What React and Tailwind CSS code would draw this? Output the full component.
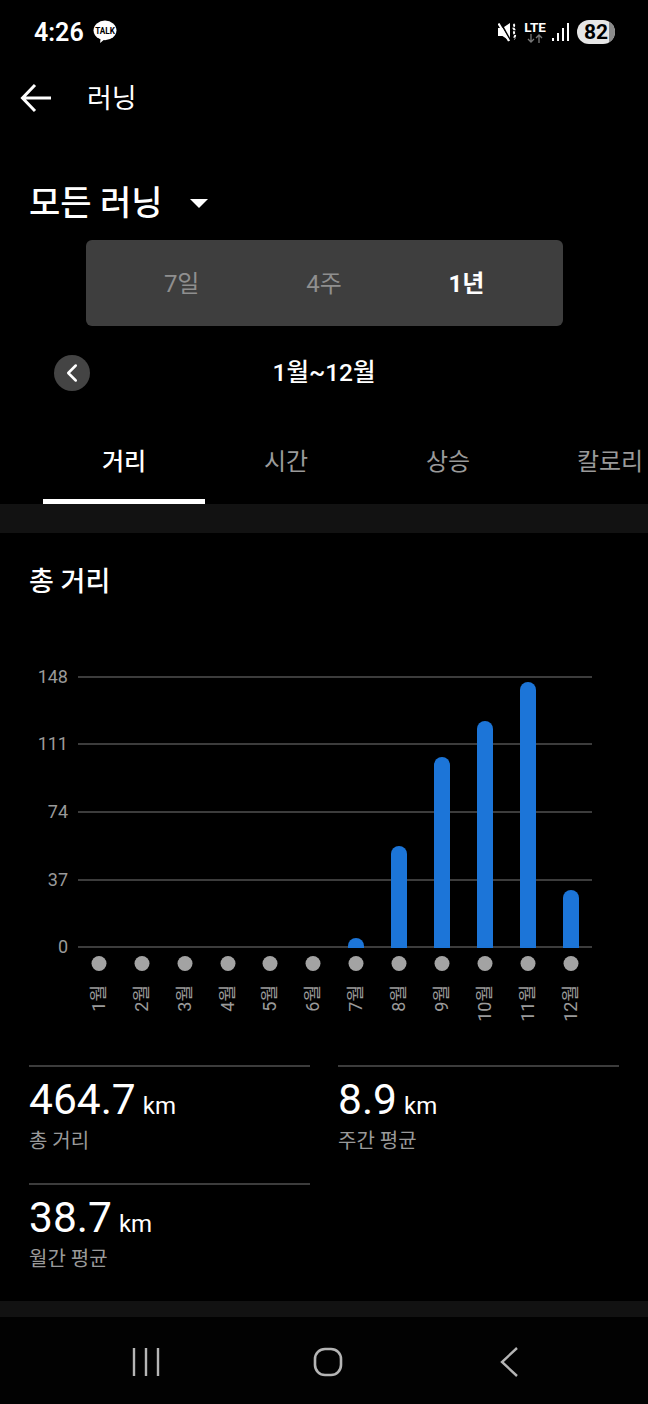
import React from 'react';
import { ChevronLeft } from 'lucide-react';

const FONT = "font-['Roboto','Noto_Sans_CJK_KR',sans-serif]";

const TICKS = [
  { label: '148', y: 677 },
  { label: '111', y: 744 },
  { label: '74', y: 812 },
  { label: '37', y: 880 },
  { label: '0', y: 947 },
];

const MONTHS = [
  { x: 99, top: null },
  { x: 142, top: null },
  { x: 185, top: null },
  { x: 228, top: null },
  { x: 270, top: null },
  { x: 313, top: null },
  { x: 356, top: 938 },
  { x: 399, top: 846 },
  { x: 442, top: 757 },
  { x: 485, top: 721 },
  { x: 528, top: 682 },
  { x: 571, top: 890 },
];

const StatusBar = () => (
  <div className="flex h-[62px] items-center justify-between pl-[34px] pr-[33px] pt-[2px]">
    <div className="flex items-center gap-[9px]">
      <span className="text-[25px] font-semibold leading-none text-white">4:26</span>
      <svg width="24" height="24" viewBox="0 0 22 22">
        <ellipse cx="11" cy="9.5" rx="10.5" ry="9" fill="#fff" />
        <path d="M7 16l-0.5 5 5-4z" fill="#fff" />
        <text x="11" y="12.5" textAnchor="middle" fontSize="7.5" fontWeight="700" fill="#000" fontFamily="Roboto">TALK</text>
      </svg>
    </div>
    <div className="flex items-center">
      {/* mute */}
      <svg width="19" height="20" viewBox="0 0 19 20" className="mr-[8px]">
        <path d="M0 6h4.500L12 1v18l-7.500-5H0z" fill="#fff" />
        <path d="M2.500 0.500l10 18" stroke="#000" strokeWidth="1.600" />
        <path d="M0.500 1.500l10.500 17.500" stroke="#fff" strokeWidth="2.200" />
        <path d="M15.500 2c2.500 2-1.500 3 .5 5s-1.500 3 .5 5-1.500 3 .5 5" stroke="#fff" strokeWidth="2" strokeDasharray="3 1" fill="none" />
      </svg>
      {/* LTE */}
      <div className="mr-[7px] flex w-[20px] flex-col items-center">
        <span className="text-[13.500px] font-bold leading-[13px] text-white">LTE</span>
        <svg width="16" height="9" viewBox="0 0 16 9">
          <path d="M4 0v8M1 5l3 3 3-3" stroke="#777" strokeWidth="1.300" fill="none" />
          <path d="M12 9V1M9 4l3-3 3 3" stroke="#777" strokeWidth="1.300" fill="none" />
        </svg>
      </div>
      {/* signal */}
      <svg width="18" height="18" viewBox="0 0 18 18" className="mr-[7px]">
        <rect x="0" y="15" width="2" height="3" fill="#fff" />
        <rect x="5" y="10" width="2" height="8" fill="#fff" />
        <rect x="10" y="5" width="2" height="13" fill="#fff" />
        <rect x="15" y="0" width="2" height="18" fill="#fff" />
      </svg>
      <div className="relative flex h-[24px] w-[38px] items-center justify-center overflow-hidden rounded-full bg-[#e6e6e6]">
        <div className="absolute inset-y-0 right-0 w-[6px] bg-[#8a8a8a]" />
        <span className="relative text-[21px] font-bold leading-none text-black">82</span>
      </div>
    </div>
  </div>
);

const Chart = () => (
  <svg width="648" height="400" viewBox="0 640 648 400" className="block">
    {TICKS.map((t) => (
      <g key={t.label}>
        <line x1="78" x2="592" y1={t.y} y2={t.y} stroke="#3c3c3c" strokeWidth="2" />
        <text x="68" y={t.y + 5.5} textAnchor="end" fontSize="18" fill="#9a9a9a" fontFamily="Roboto">{t.label}</text>
      </g>
    ))}
    {MONTHS.map((m, i) => (
      <g key={m.x}>
        {m.top && (
          <path
            d={`M${m.x - 8} 948V${m.top + 8}a8 8 0 0 1 16 0V948z`}
            fill="#1c75d8"
          />
        )}
        <circle cx={m.x} cy="963.5" r="7.5" fill="#a3a3a3" />
        <text
          transform={`translate(${m.x + 6} 985) rotate(-90)`}
          textAnchor="end"
          fontSize="18"
          fill="#9a9a9a"
          fontFamily="Roboto, 'Noto Sans CJK KR', sans-serif"
        >
          {i + 1}월
        </text>
      </g>
    ))}
  </svg>
);

const Stat = ({ value, unit, label }) => (
  <div className="border-t-2 border-[#3c3c3c] pt-[8px]">
    <div className="flex items-baseline gap-[7px] text-white">
      <span className="text-[42.500px] leading-[50px]">{value}</span>
      <span className="text-[24px] leading-none">{unit}</span>
    </div>
    <div className="mt-[3px] text-[20px] leading-[26px] text-[#9a9a9a]">{label}</div>
  </div>
);

export default function App() {
  return (
    <div className={`flex h-[1404px] w-[648px] flex-col overflow-hidden bg-black ${FONT}`}>
      <StatusBar />

      <div className="flex h-[72px] items-center pl-[20px]">
        <svg width="32" height="30" viewBox="0 0 32 30">
          <path d="M31 15H3M15 2L2.500 15 15 28" fill="none" stroke="#fff" strokeWidth="3" />
        </svg>
        <span className="ml-[35px] pt-[3px] text-[27px] text-white">러닝</span>
      </div>

      <div className="mt-[37px] flex h-[64px] items-center pl-[29px]">
        <span className="text-[34px] font-medium text-white">모든 러닝</span>
        <span className="ml-[27px] h-0 w-0 border-x-[9px] border-t-[9px] border-x-transparent border-t-white" />
      </div>

      <div className="mx-auto mt-[5px] grid h-[86px] w-[477px] grid-cols-3 items-center rounded-[6px] bg-[#3e3e3e] px-[25px] pt-[2px] text-center text-[24px]">
        <span className="text-[#8f8f8f]">7일</span>
        <span className="text-[#8f8f8f]">4주</span>
        <span className="font-bold text-white">1년</span>
      </div>

      <div className="relative mt-[29px] flex h-[36px] items-center justify-center">
        <div className="absolute left-[54px] flex h-[36px] w-[36px] items-center justify-center rounded-full bg-[#444]">
          <ChevronLeft size={30} strokeWidth={2} className="text-white" />
        </div>
        <span className="text-[24.500px] font-medium text-white">1월~12월</span>
      </div>

      <div className="mt-[37px] flex h-[76px] pl-[43px]">
        {['거리', '시간', '상승', '칼로리'].map((t, i) => (
          <div
            key={t}
            className={`flex w-[162px] shrink-0 items-center justify-center text-[24px] ${
              i === 0 ? 'border-b-[5px] border-white pb-[3px] font-medium text-white' : 'pb-[8px] text-[#9a9a9a]'
            }`}
          >
            {t}
          </div>
        ))}
      </div>

      <div className="h-[29px] bg-[#121212]" />

      <div className="mt-[30px] h-[38px] pl-[29px] text-[27px] font-medium leading-[38px] text-white">총 거리</div>

      <div className="mt-[39px]">
        <Chart />
      </div>

      <div className="mt-[25px] grid grid-cols-[281px_281px] gap-x-[28px] pl-[29px]">
        <div className="h-[118px]"><Stat value="464.7" unit="km" label="총 거리" /></div>
        <div className="h-[118px]"><Stat value="8.9" unit="km" label="주간 평균" /></div>
        <Stat value="38.7" unit="km" label="월간 평균" />
      </div>

      <div className="mt-auto h-[16px] bg-[#121212]" />

      <div className="flex h-[87px] items-center gap-[152px] bg-[#020202] pl-[131px] pt-[3px]">
        <svg width="30" height="30" viewBox="0 0 30 30">
          <path d="M3 1v28M15 1v28M27 1v28" stroke="#b5b5b5" strokeWidth="2.400" />
        </svg>
        <svg width="30" height="30" viewBox="0 0 30 30">
          <rect x="2" y="2" width="26" height="26" rx="10" fill="none" stroke="#b5b5b5" strokeWidth="2.600" />
        </svg>
        <svg width="20" height="30" viewBox="0 0 20 30" className="ml-[4px]">
          <path d="M18 1L3 15l15 14" fill="none" stroke="#b5b5b5" strokeWidth="2.400" />
        </svg>
      </div>
    </div>
  );
}
